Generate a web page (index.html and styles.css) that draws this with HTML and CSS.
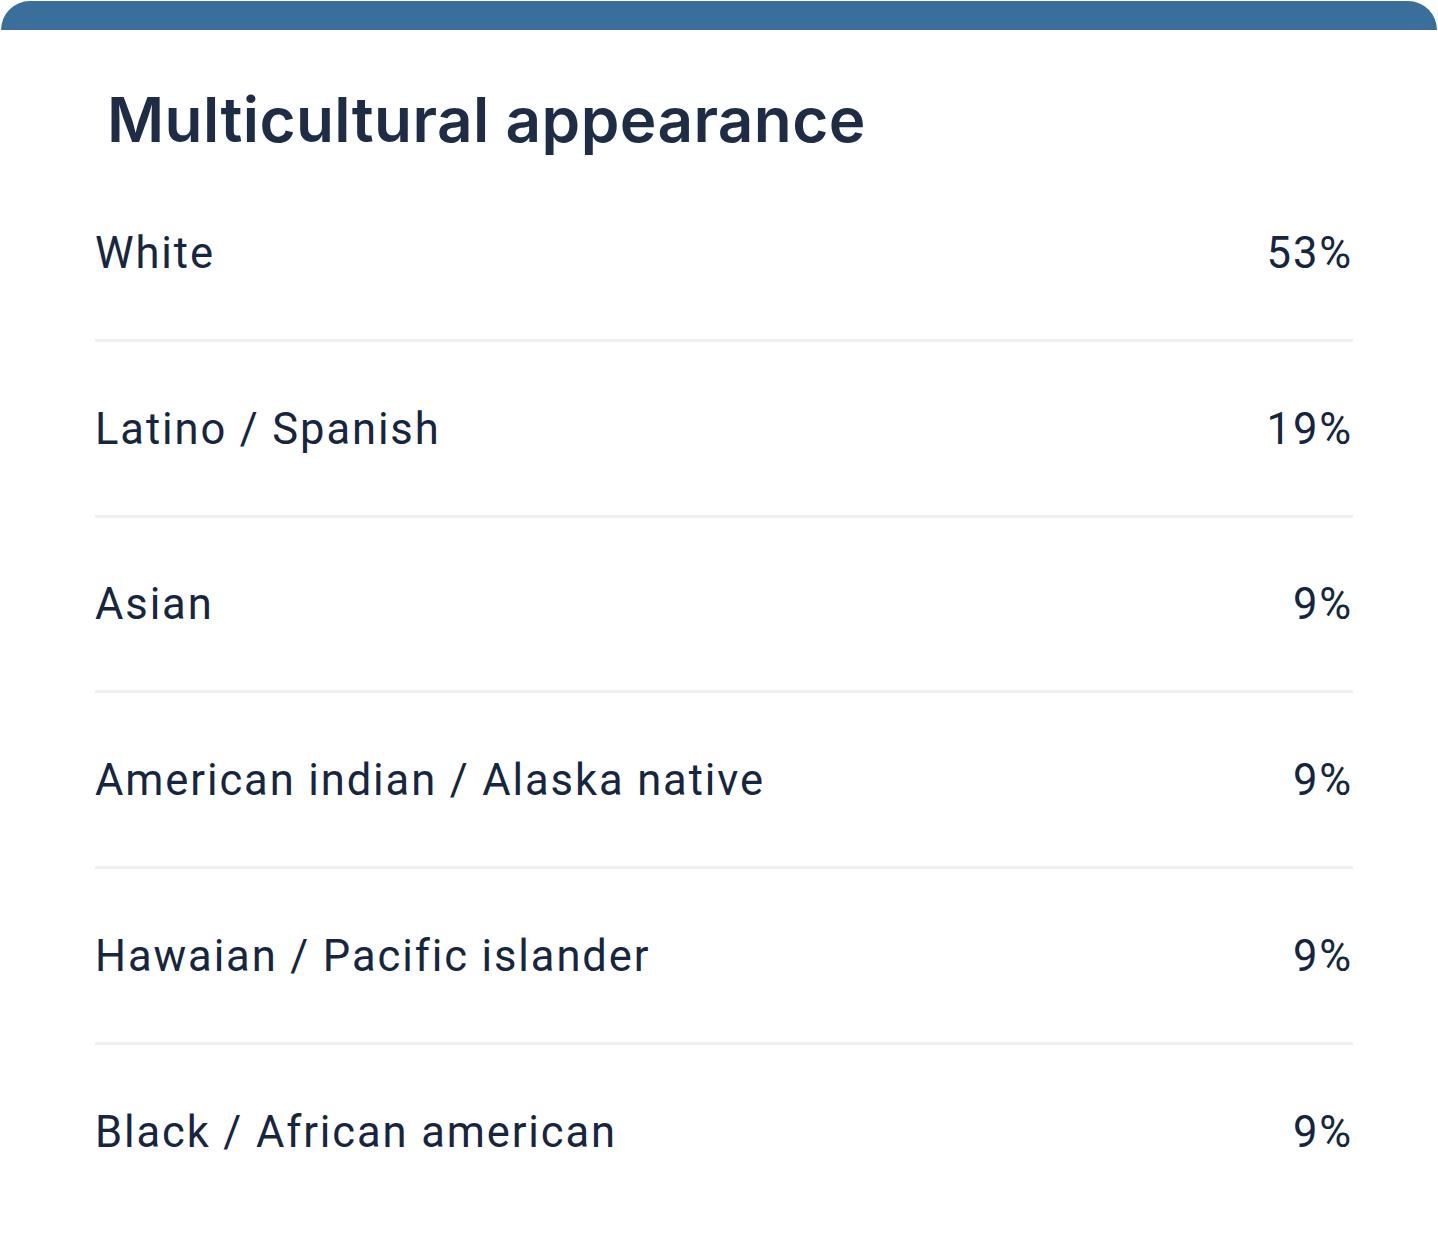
FILE: index.html
```html
<!DOCTYPE html>
<html lang="en">
<head>
<meta charset="utf-8">
<title>Multicultural appearance</title>
<link rel="stylesheet" href="styles.css">
</head>
<body>
<section class="card">
  <div class="card-bar"></div>
  <h1 class="card-title">Multicultural appearance</h1>
  <ul class="stats">
    <li class="stat"><span class="stat-label">White</span><span class="stat-value">53%</span></li>
    <li class="stat"><span class="stat-label">Latino / Spanish</span><span class="stat-value">19%</span></li>
    <li class="stat"><span class="stat-label">Asian</span><span class="stat-value">9%</span></li>
    <li class="stat"><span class="stat-label">American indian / Alaska native</span><span class="stat-value">9%</span></li>
    <li class="stat"><span class="stat-label">Hawaian / Pacific islander</span><span class="stat-value">9%</span></li>
    <li class="stat"><span class="stat-label">Black / African american</span><span class="stat-value">9%</span></li>
  </ul>
</section>
</body>
</html>
```

FILE: styles.css
```css
html, body {
  margin: 0;
  padding: 0;
  background: #ffffff;
}

.card {
  width: 1438px;
  height: 1243px;
  background: #ffffff;
  box-sizing: border-box;
  padding-top: 1px;
}

.card-bar {
  height: 29px;
  margin: 0 1px;
  background: #3b6f9b;
  border-radius: 30px 30px 0 0;
}

.card-title {
  margin: 0;
  padding: 52px 0 0 107px;
  height: 84px;
  font-family: "Inter", "Open Sans", sans-serif;
  font-weight: 600;
  font-size: 62px;
  line-height: 76px;
  color: #1e2c45;
  letter-spacing: 0.4px;
}

.stats {
  list-style: none;
  margin: 0;
  padding: 0 85px 0 95px;
}

.stat {
  display: flex;
  justify-content: space-between;
  align-items: center;
  height: 172.75px;
  border-bottom: 3px solid #eef0f3;
  font-family: "Roboto", "Liberation Sans", sans-serif;
  font-size: 43.5px;
  color: #172640;
  letter-spacing: 1.9px;
}

.stat-label {
  padding-top: 2px;
}

.stat-value {
  padding-top: 2px;
}

.stat:last-child {
  border-bottom: 0;
}
```
